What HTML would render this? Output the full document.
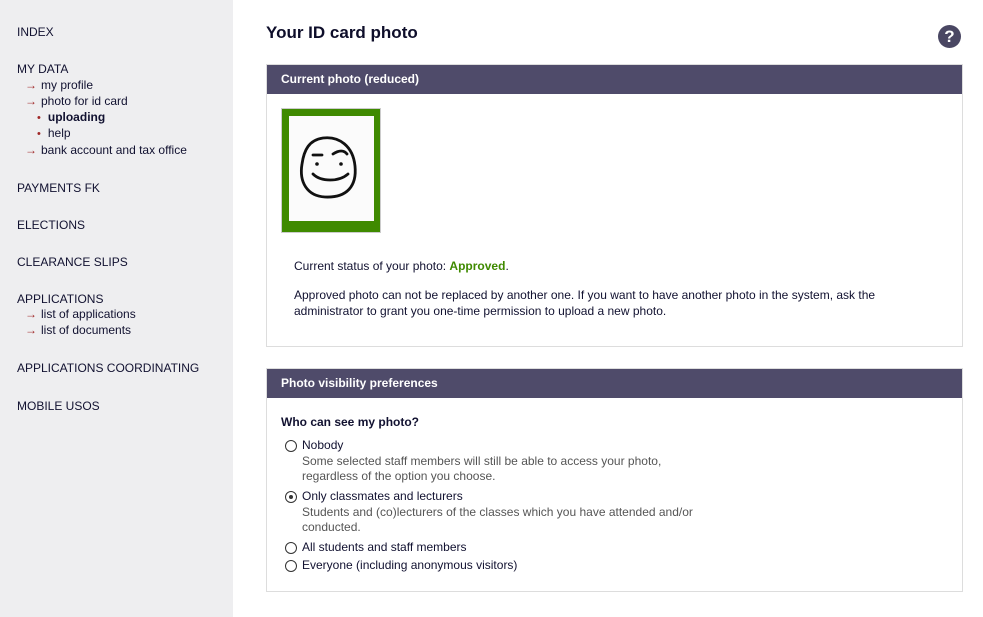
<!DOCTYPE html>
<html><head><meta charset="utf-8"><style>
*{margin:0;padding:0;box-sizing:border-box}
body{width:983px;height:617px;overflow:hidden;background:#fff;font-family:"Liberation Sans",sans-serif;color:#111130;font-size:12px;position:relative}
.sb{position:absolute;left:0;top:0;width:233px;height:617px;background:#eeeef0}
.t{position:absolute;white-space:nowrap;line-height:15px}
.a{color:#a02828;font-size:12px;margin-right:4px}
.d{color:#a02828;font-size:11px;margin-right:7px}
.p{position:absolute;left:266px;width:697px;border:1px solid #ddd;background:#fff}
.h{background:#4f4b6a;color:#fff;font-weight:bold;font-size:12px;height:29px;line-height:28px;padding-left:14px}
.r{position:absolute;width:12px;height:12px;border:1.5px solid #333;border-radius:50%}
.g{color:#555}
</style></head><body>
<div class="sb">
<div class="t" style="left:17px;top:25px">INDEX</div>
<div class="t" style="left:17px;top:62px">MY DATA</div>
<div class="t" style="left:25px;top:78px"><span class="a">→</span>my profile</div>
<div class="t" style="left:25px;top:94px"><span class="a">→</span>photo for id card</div>
<div class="t" style="left:37px;top:110px"><span class="d">•</span><b>uploading</b></div>
<div class="t" style="left:37px;top:126px"><span class="d">•</span>help</div>
<div class="t" style="left:25px;top:143px"><span class="a">→</span>bank account and tax office</div>
<div class="t" style="left:17px;top:181px">PAYMENTS FK</div>
<div class="t" style="left:17px;top:218px">ELECTIONS</div>
<div class="t" style="left:17px;top:255px">CLEARANCE SLIPS</div>
<div class="t" style="left:17px;top:292px">APPLICATIONS</div>
<div class="t" style="left:25px;top:307px"><span class="a">→</span>list of applications</div>
<div class="t" style="left:25px;top:323px"><span class="a">→</span>list of documents</div>
<div class="t" style="left:17px;top:361px">APPLICATIONS COORDINATING</div>
<div class="t" style="left:17px;top:399px">MOBILE USOS</div>
</div>
<div class="t" style="left:266px;top:22px;font-size:17px;line-height:22px;font-weight:bold;color:#0e0e2a">Your ID card photo</div>
<div style="position:absolute;left:938px;top:25px;width:23px;height:23px;border-radius:50%;background:#4a4763;color:#fff;font-weight:bold;font-size:17px;line-height:23px;text-align:center">?</div>

<div class="p" style="top:64px;height:283px">
<div class="h">Current photo (reduced)</div>
<div style="position:absolute;left:14px;top:43px;width:100px;height:125px;background:#3f8a00;border:1px solid #ccc">
<div style="position:absolute;left:7px;top:7px;width:85px;height:105px;background:#fbfbfb">
<svg width="85" height="105" viewBox="0 0 85 105"><g fill="none" stroke="#111" stroke-width="2.8" stroke-linecap="round"><path d="M13 48C10 66 18 80 36 81C58 82 68 70 66 50C64 30 50 20 34 22C20 24 15 34 13 48Z"/><path d="M24 39L33 39M44 38C50 34 55 34 58 38M24 58C32 66 50 66 59 58"/></g><circle cx="28" cy="48" r="1.8" fill="#111"/><circle cx="52" cy="48" r="1.8" fill="#111"/></svg>
</div></div>
<div class="t" style="left:27px;top:194px">Current status of your photo: <b style="color:#3f8a00">Approved</b>.</div>
<div class="t" style="left:27px;top:223px">Approved photo can not be replaced by another one. If you want to have another photo in the system, ask the</div>
<div class="t" style="left:27px;top:239px">administrator to grant you one-time permission to upload a new photo.</div>
</div>

<div class="p" style="top:368px;height:224px">
<div class="h">Photo visibility preferences</div>
<div class="t" style="left:14px;top:46px;font-weight:bold">Who can see my photo?</div>
<div class="r" style="left:18px;top:71px"></div>
<div class="t" style="left:35px;top:69px">Nobody</div>
<div class="t g" style="left:35px;top:85px">Some selected staff members will still be able to access your photo,</div>
<div class="t g" style="left:35px;top:100px">regardless of the option you choose.</div>
<div class="r" style="left:18px;top:122px"><div style="position:absolute;left:2.5px;top:2.5px;width:4px;height:4px;border-radius:50%;background:#333"></div></div>
<div class="t" style="left:35px;top:120px">Only classmates and lecturers</div>
<div class="t g" style="left:35px;top:136px">Students and (co)lecturers of the classes which you have attended and/or</div>
<div class="t g" style="left:35px;top:151px">conducted.</div>
<div class="r" style="left:18px;top:173px"></div>
<div class="t" style="left:35px;top:171px">All students and staff members</div>
<div class="r" style="left:18px;top:191px"></div>
<div class="t" style="left:35px;top:189px">Everyone (including anonymous visitors)</div>
</div>
</body></html>
